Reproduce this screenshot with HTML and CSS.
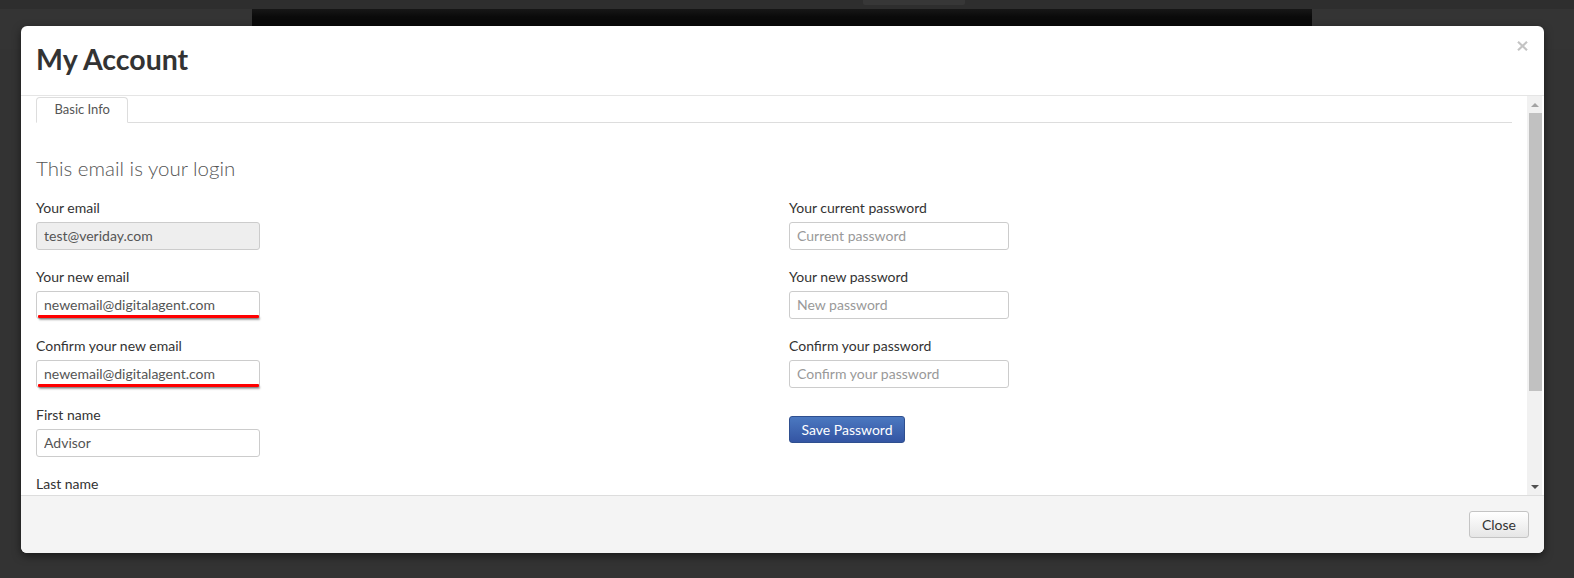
FILE: index.html
```html
<!DOCTYPE html>
<html lang="en">
<head>
<meta charset="utf-8">
<title>My Account</title>
<link rel="stylesheet" href="styles.css">
</head>
<body>
<div class="page">
  <div class="topbar"><div class="topbar-box"></div></div>
  <div class="stage"><div class="stage-panel"></div></div>
</div>

<div class="modal">
  <div class="modal-header">
    <h1 class="modal-title">My Account</h1>
    <button class="modal-close" aria-label="Close">
      <svg width="11" height="10" viewBox="0 0 11 10"><path d="M1 0.8 L10 9.2 M10 0.8 L1 9.2" stroke="#c4c4c4" stroke-width="2.2" fill="none"/></svg>
    </button>
  </div>

  <div class="modal-body">
    <div class="scroll-content">
      <ul class="tabs"><li class="tab active">Basic Info</li></ul>

      <h2 class="section-title">This email is your login</h2>

      <div class="form-grid">
        <div class="col col-left">
          <div class="field">
            <label>Your email</label>
            <div class="input-wrap"><input class="input disabled" type="text" value="test@veriday.com" readonly></div>
          </div>
          <div class="field">
            <label>Your new email</label>
            <div class="input-wrap marked"><input class="input" type="text" value="newemail@digitalagent.com"></div>
          </div>
          <div class="field">
            <label>Confirm your new email</label>
            <div class="input-wrap marked"><input class="input" type="text" value="newemail@digitalagent.com"></div>
          </div>
          <div class="field">
            <label>First name</label>
            <div class="input-wrap"><input class="input" type="text" value="Advisor"></div>
          </div>
          <div class="field">
            <label>Last name</label>
            <div class="input-wrap"><input class="input" type="text" value="Veriday"></div>
          </div>
        </div>

        <div class="col col-right">
          <div class="field">
            <label>Your current password</label>
            <div class="input-wrap"><input class="input" type="password" placeholder="Current password"></div>
          </div>
          <div class="field">
            <label>Your new password</label>
            <div class="input-wrap"><input class="input" type="password" placeholder="New password"></div>
          </div>
          <div class="field">
            <label>Confirm your password</label>
            <div class="input-wrap"><input class="input" type="password" placeholder="Confirm your password"></div>
          </div>
          <button class="btn btn-primary">Save Password</button>
        </div>
      </div>
    </div>

    <div class="scrollbar">
      <div class="sb-btn"><span class="tri up"></span></div>
      <div class="sb-track"><div class="sb-thumb"></div></div>
      <div class="sb-btn"><span class="tri down"></span></div>
    </div>
  </div>

  <div class="modal-footer">
    <button class="btn btn-default">Close</button>
  </div>
</div>
</body>
</html>
```

FILE: styles.css
```css
* { box-sizing: border-box; }

html, body {
  margin: 0;
  padding: 0;
  height: 100%;
  overflow: hidden;
}

body {
  background: #333333;
  font-family: "Lato", "Open Sans", "Liberation Sans", sans-serif;
  color: #333;
  font-size: 14px;
}

.page { width: 100%; }

.topbar {
  height: 9px;
  background: #2e2e2e;
}

.topbar-box {
  margin-left: 863px;
  width: 102px;
  height: 5px;
  background: #373737;
  border-radius: 0 0 2px 2px;
}

.stage {
  background: #343434;
  height: 40px;
}

.stage-panel {
  margin-left: 252px;
  width: 1060px;
  height: 100%;
  background: linear-gradient(#171717, #0a0a0a 8px);
}

/* Modal */
.modal {
  position: absolute;
  left: 21px;
  top: 26px;
  width: 1523px;
  height: 527px;
  background: #fff;
  border-radius: 6px;
  overflow: hidden;
  box-shadow: 0 3px 9px rgba(0, 0, 0, 0.5);
  display: flex;
  flex-direction: column;
}

.modal-header {
  height: 70px;
  flex: 0 0 70px;
  padding: 15px 15px 0 15px;
  border-bottom: 1px solid #e5e5e5;
  display: flex;
  justify-content: space-between;
  align-items: flex-start;
}

.modal-title {
  margin: 1px 0 0 0;
  font-size: 28.5px;
  line-height: 35px;
  font-weight: 700;
  color: #333;
}

.modal-close {
  border: 0;
  background: transparent;
  padding: 0;
  width: 11px;
  height: 10px;
  margin-right: 1px;
  display: block;
  cursor: pointer;
}
.modal-close svg { display: block; }

.modal-body {
  flex: 0 0 399px;
  height: 399px;
  display: flex;
  overflow: hidden;
}

.scroll-content {
  flex: 1;
  padding: 1px 15px 0 15px;
  overflow: hidden;
}

/* Tabs */
.tabs {
  list-style: none;
  margin: 0;
  padding: 0;
  border-bottom: 1px solid #ddd;
  display: flex;
}

.tab {
  margin-bottom: -1px;
  padding: 2px 17.5px 4px 17.5px;
  font-size: 13px;
  line-height: 18px;
  color: #555;
  border: 1px solid #ddd;
  border-bottom-color: transparent;
  border-radius: 4px 4px 0 0;
  background: #fff;
}

.section-title {
  margin: 33px 0 17px 0;
  font-size: 20.5px;
  line-height: 25px;
  font-weight: 300;
  color: #555;
}

.form-grid {
  display: grid;
  grid-template-columns: 1fr 1fr;
  column-gap: 30px;
}

.field { margin-bottom: 17px; }

.field label {
  display: block;
  font-size: 14px;
  line-height: 20px;
  color: #333;
  margin-bottom: 4px;
}

.input-wrap { position: relative; }

.input {
  display: block;
  width: 224px;
  height: 28px;
  padding: 0 7px 1px 7px;
  border: 1px solid #ccc;
  border-radius: 3px;
  background: #fff;
  font-family: inherit;
  font-size: 14px;
  color: #555;
  outline: none;
}

.col-right .input { width: 220px; }

.input.disabled {
  background: #eeeeee;
  color: #555;
}

.input::placeholder { color: #999; }

.input-wrap.marked::after {
  content: "";
  position: absolute;
  left: 2px;
  top: 24px;
  width: 221px;
  height: 3px;
  background: #ff0000;
  border-radius: 1px;
  box-shadow: 1px 2px 2px rgba(0, 0, 0, 0.35);
}

/* Buttons */
.btn {
  font-family: inherit;
  font-size: 14px;
  height: 27px;
  line-height: 25px;
  border-radius: 3px;
  cursor: pointer;
  padding: 0;
  white-space: nowrap;
  text-align: center;
}

.btn-primary {
  display: block;
  margin-top: 28px;
  width: 116px;
  color: #fff;
  border: 1px solid #2f4f8f;
  background: linear-gradient(#4b78c0, #3455a3);
}

.btn-default {
  width: 60px;
  color: #333;
  border: 1px solid #c4c4c4;
  background: linear-gradient(#ffffff, #e6e6e6);
}

/* Fake scrollbar */
.scrollbar {
  flex: 0 0 15px;
  width: 15px;
  margin-right: 2px;
  background: #f1f1f1;
  display: flex;
  flex-direction: column;
}

.sb-btn {
  flex: 0 0 17px;
  height: 17px;
  display: flex;
  align-items: center;
  justify-content: center;
}

.tri {
  width: 0;
  height: 0;
  border-left: 4px solid transparent;
  border-right: 4px solid transparent;
}
.tri.up { border-bottom: 4px solid #a3a3a3; }
.tri.down { border-top: 4px solid #505050; }

.sb-track {
  flex: 1;
  padding-left: 2px;
}

.sb-thumb {
  height: 278px;
  background: #c1c1c1;
}

/* Footer */
.modal-footer {
  flex: 0 0 58px;
  height: 58px;
  border-top: 1px solid #ddd;
  background: #f4f4f4;
  padding: 15px 15px 0 15px;
  display: flex;
  justify-content: flex-end;
}
```
